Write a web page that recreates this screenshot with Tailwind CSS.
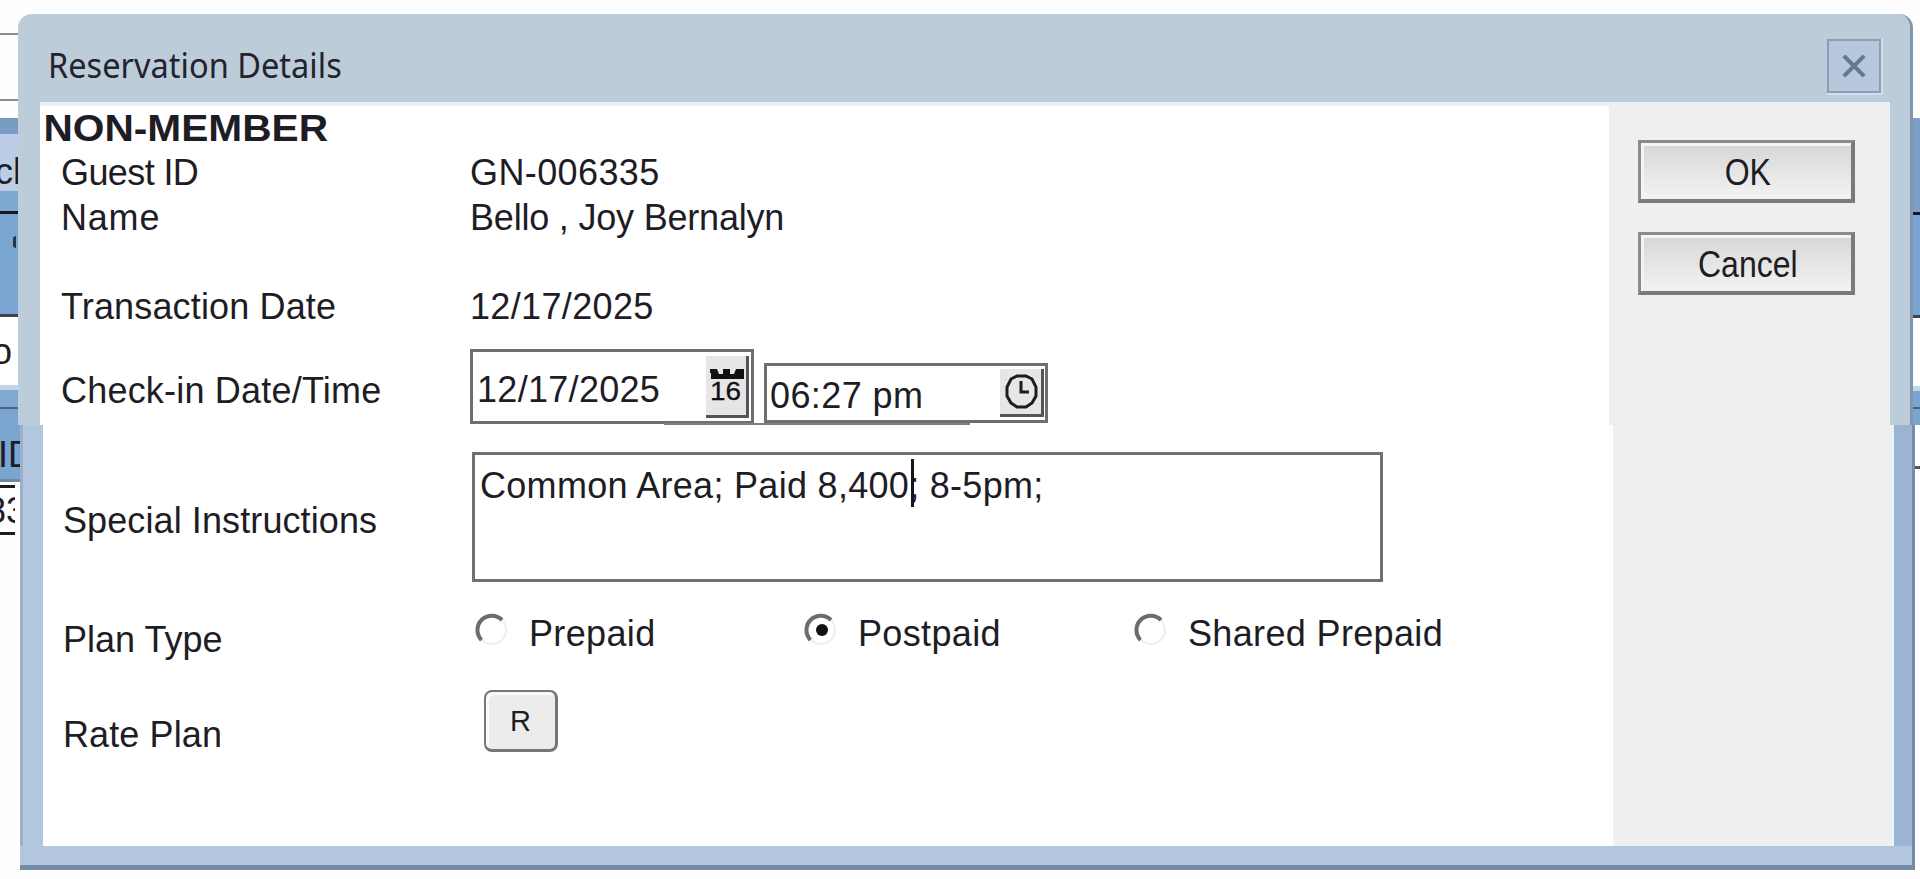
<!DOCTYPE html>
<html lang="en">
<head>
    <meta charset="UTF-8">
    <meta name="viewport" content="width=device-width, initial-scale=1.0">
    <title>Reservation Details</title>

    <!-- Tailwind CSS -->
    <script src="https://cdn.jsdelivr.net/npm/@tailwindcss/browser@4"></script>
</head>
<body class="relative w-[1920px] h-[879px] overflow-hidden bg-[#fefefe] font-['Liberation_Sans',sans-serif] text-[36px] leading-[44px] text-[#1e1c24] whitespace-nowrap">

    <!-- Application window behind the dialog -->
    <div class="flex justify-between">
        <div class="w-[20px] overflow-hidden">
            <div class="h-[35px] border-b-2 border-[#8c8c8c]"></div>
            <div class="h-[66px] border-b-2 border-[#8c8c8c]"></div>
            <div class="h-[17px]"></div>
            <div class="h-[16px] bg-[#7b9cc2]"></div>
            <div class="h-[57px] bg-[#bccde8] pt-[16px]"><span class="-ml-[5px]">ch</span></div>
            <div class="h-[23px] bg-[#7da8d0] border-b-3 border-[#15181f]"></div>
            <div class="h-[103px] bg-[#79a5d0] border-b-3 border-[#3c4452] pt-[22px]"><div class="w-[3px] h-[12px] ml-[13px] rounded-l-full bg-[#26344a]"></div></div>
            <div class="h-[68px] bg-white pt-[13px]"><span class="-ml-[8px]">o</span></div>
            <div class="h-[5px] bg-[#c3d6e8]"></div>
            <div class="h-[19px] bg-[#7fa9d2] border-b-2 border-[#4c6484]"></div>
            <div class="h-[73px] bg-[#79a5d0] border-b-3 border-[#7287a5] pt-[24px]"><span class="-ml-[2px]">ID</span></div>
            <div class="w-[15px] h-[6px] bg-white border-b-3 border-[#1c1c22]"></div>
            <div class="w-[15px] h-[47px] bg-white border-b-3 border-[#1c1c22] overflow-hidden pt-px"><span class="-ml-[14px]">83</span></div>
        </div>
        <div class="w-[8px]">
            <div class="h-[118px]"></div>
            <div class="h-[97px] bg-[#7b9fc8] border-b-3 border-[#15181f]"></div>
            <div class="h-[103px] bg-[#79a5d0] border-b-3 border-[#3c4452]"></div>
            <div class="h-[68px] bg-white"></div>
            <div class="h-[5px] bg-[#c3d6e8]"></div>
            <div class="h-[18px] bg-[#79a5d0] border-b-2 border-[#4c6484]"></div>
            <div class="h-[16px] bg-[#79a5d0]"></div>
            <div class="h-[44px] bg-white border-b-3 border-[#55555d]"></div>
        </div>
    </div>

    <!-- Dialog -->
    <div class="absolute left-0 top-[14px] w-[1920px] h-[857px]">

        <!-- Title bar, guest and date rows -->
        <div class="ml-[18px] w-[1895px] h-[411px] flex flex-col rounded-t-[14px] bg-[#bdccd9] border-r-3 border-[#8095b0]">
            <div class="h-[88px] flex items-center justify-between pl-[30px] pr-[29px]">
                <div class="origin-left scale-x-[.93] pt-[14px] font-['Noto_Sans',sans-serif] text-[35px] text-[#23232e]">Reservation Details</div>
                <div class="size-[54px] mt-[18px] mb-[2px] border-2 border-[#8a9eb8] bg-[#b7c7dc] shadow-[1px_1px_0_1px_#d3dfea] flex items-center justify-center">
                    <svg class="size-[24px]" viewBox="0 0 26 26" fill="none" stroke="#66788f" stroke-width="4.500">
                        <path d="M2 2L24 24M24 2L2 24"/>
                    </svg>
                </div>
            </div>
            <div class="ml-[22px] mr-[20px] h-[323px] flex border-t-4 border-[#e9f0f8]">
                <div class="w-[1569px] bg-white">
                    <div class="h-[45px] pl-[3px] font-bold origin-left scale-x-[1.13] leading-[45px] w-[300px]">NON-MEMBER</div>
                    <div class="grid grid-cols-[409px_1fr] pl-[21px]">
                        <div class="h-[45px] tracking-[-.6px]">Guest ID</div>
                        <div class="tracking-[.4px]">GN-006335</div>
                        <div class="h-[89px] tracking-[.8px]">Name</div>
                        <div class="tracking-[-.2px]">Bello , Joy Bernalyn</div>
                        <div class="h-[62px] tracking-[.15px]">Transaction Date</div>
                        <div class="tracking-[.35px]">12/17/2025</div>
                        <div class="pt-[22px] tracking-[.2px]">Check-in Date/Time</div>
                        <div class="relative flex items-end gap-[10px] h-[77px]">
                            <div class="w-[284px] h-[75px] border-3 border-[#6f6f6f] bg-white flex justify-between pl-[4px]">
                                <div class="pt-[16px] tracking-[.3px]">12/17/2025</div>
                                <div class="w-[43px] h-[62px] mt-[4px] mr-[2px] bg-[#e6e6e6] border-r-3 border-b-3 border-[#555]">
                                    <svg class="w-[40px] h-[59px]" viewBox="0 0 40 59">
                                        <path d="M4 13h7l2 5h4v-5h7v5h4l2-5h8v10H5v-6H4z" fill="#111"/>
                                        <text x="4" y="44" font-family="Liberation Sans" font-size="26" textLength="31" lengthAdjust="spacingAndGlyphs" fill="#111" stroke="#111" stroke-width=".3">16</text>
                                    </svg>
                                </div>
                            </div>
                            <div class="w-[284px] h-[60px] mb-px border-3 border-[#6f6f6f] bg-white flex justify-between pl-[3px]">
                                <div class="pt-[8px] tracking-[.4px]">06:27 pm</div>
                                <div class="w-[44px] h-[48px] mt-[3px] mr-[1px] bg-[#e6e6e6] border-r-3 border-b-3 border-[#555]">
                                    <svg class="w-[41px] h-[45px]" viewBox="0 0 41 45" fill="none" stroke="#1c1c1c" stroke-width="3">
                                        <path d="M17 7h9l6 3 4 8v9l-4 7-6 4h-9l-6-4-4-7v-9l4-8z"/>
                                        <path d="M21 12v11h8"/>
                                    </svg>
                                </div>
                            </div>
                            <div class="absolute left-[194px] bottom-[-1px] w-[306px] h-[2px] bg-[#808080]"></div>
                        </div>
                    </div>
                </div>
                <div class="grow bg-[#efefef] pl-[29px] pt-[34px] text-center">
                    <button class="block w-[217px] h-[63px] mb-[29px] pt-[3px] border-3 border-t-[#8c8c8c] border-l-[#8c8c8c] border-r-[#7a7a7a] border-b-[#7a7a7a] border-b-4 border-r-4 bg-linear-to-b from-[#d6d6d6] to-[#f3f3f3] shadow-[inset_3px_3px_0_#f4f4f4]"><span class="inline-block scale-x-[.89] pl-[4px]">OK</span></button>
                    <button class="block w-[217px] h-[63px] pt-[4px] border-3 border-t-[#8c8c8c] border-l-[#8c8c8c] border-r-[#7a7a7a] border-b-[#7a7a7a] border-b-4 border-r-4 bg-linear-to-b from-[#d6d6d6] to-[#f3f3f3] shadow-[inset_3px_3px_0_#f4f4f4]"><span class="inline-block scale-x-[.89] pl-[4px]">Cancel</span></button>
                </div>
            </div>
        </div>

        <!-- Instructions, plan type and rate plan rows -->
        <div class="ml-[20px] w-[1895px] h-[445px] flex flex-col bg-[#b3c6df] border-r-3 border-b-5 border-[#758ba8]">
            <div class="flex h-[421px] shrink-0">
                <div class="w-[23px] border-l-3 border-[#9bb1cb] bg-[#b3c6df]"></div>
                <div class="w-[1570px] bg-white pl-[20px]">
                    <div class="grid grid-cols-[409px_1fr]">
                        <div class="h-[187px] pt-[74px] tracking-[.1px]">Special Instructions</div>
                        <div class="pt-[27px]">
                            <div class="relative w-[911px] h-[130px] border-3 border-[#707070] bg-white pl-[5px] pt-[9px] tracking-[.3px]">
                                Common Area; Paid 8,400; 8-5pm;
                                <div class="absolute left-[436px] top-[4px] w-[3px] h-[48px] bg-[#15151c]"></div>
                            </div>
                        </div>
                        <div class="h-[78px] pt-[6px]">Plan Type</div>
                        <div class="flex tracking-[.35px]">
                            <div class="flex w-[329px] gap-[21px] pl-[3px]">
                                <svg class="w-[33px] h-[36px]" viewBox="0 0 33 36" fill="none"><circle cx="17" cy="18" r="14" stroke="#ededed" stroke-width="2"/><path d="M6.500 28A14 14 0 0 1 27 8" stroke="#6c6c6c" stroke-width="4"/></svg>
                                <span>Prepaid</span>
                            </div>
                            <div class="flex w-[329px] gap-[21px] pl-[3px]">
                                <svg class="w-[33px] h-[36px]" viewBox="0 0 33 36" fill="none"><circle cx="17" cy="18" r="14" stroke="#ededed" stroke-width="2"/><path d="M6.500 28A14 14 0 0 1 27 8" stroke="#6c6c6c" stroke-width="4"/><circle cx="18" cy="18" r="6" fill="#111"/></svg>
                                <span>Postpaid</span>
                            </div>
                            <div class="flex gap-[21px] pl-[4px]">
                                <svg class="w-[33px] h-[36px]" viewBox="0 0 33 36" fill="none"><circle cx="17" cy="18" r="14" stroke="#ededed" stroke-width="2"/><path d="M6.500 28A14 14 0 0 1 27 8" stroke="#6c6c6c" stroke-width="4"/></svg>
                                <span>Shared Prepaid</span>
                            </div>
                        </div>
                        <div class="pt-[23px] tracking-[.1px]">Rate Plan</div>
                        <div class="pl-[12px]">
                            <button class="block w-[74px] h-[62px] border-2 border-b-3 border-r-3 border-[#777] rounded-[8px] bg-[#ececec] shadow-[inset_3px_3px_0_#fafafa] text-[29px] leading-[56px]">R</button>
                        </div>
                    </div>
                </div>
                <div class="w-[281px] bg-[#efefef] border-r-2 border-[#e8f3fc]"></div>
                <div class="grow bg-[#9bb4d1]"></div>
            </div>
        </div>
    </div>
</body>
</html>
